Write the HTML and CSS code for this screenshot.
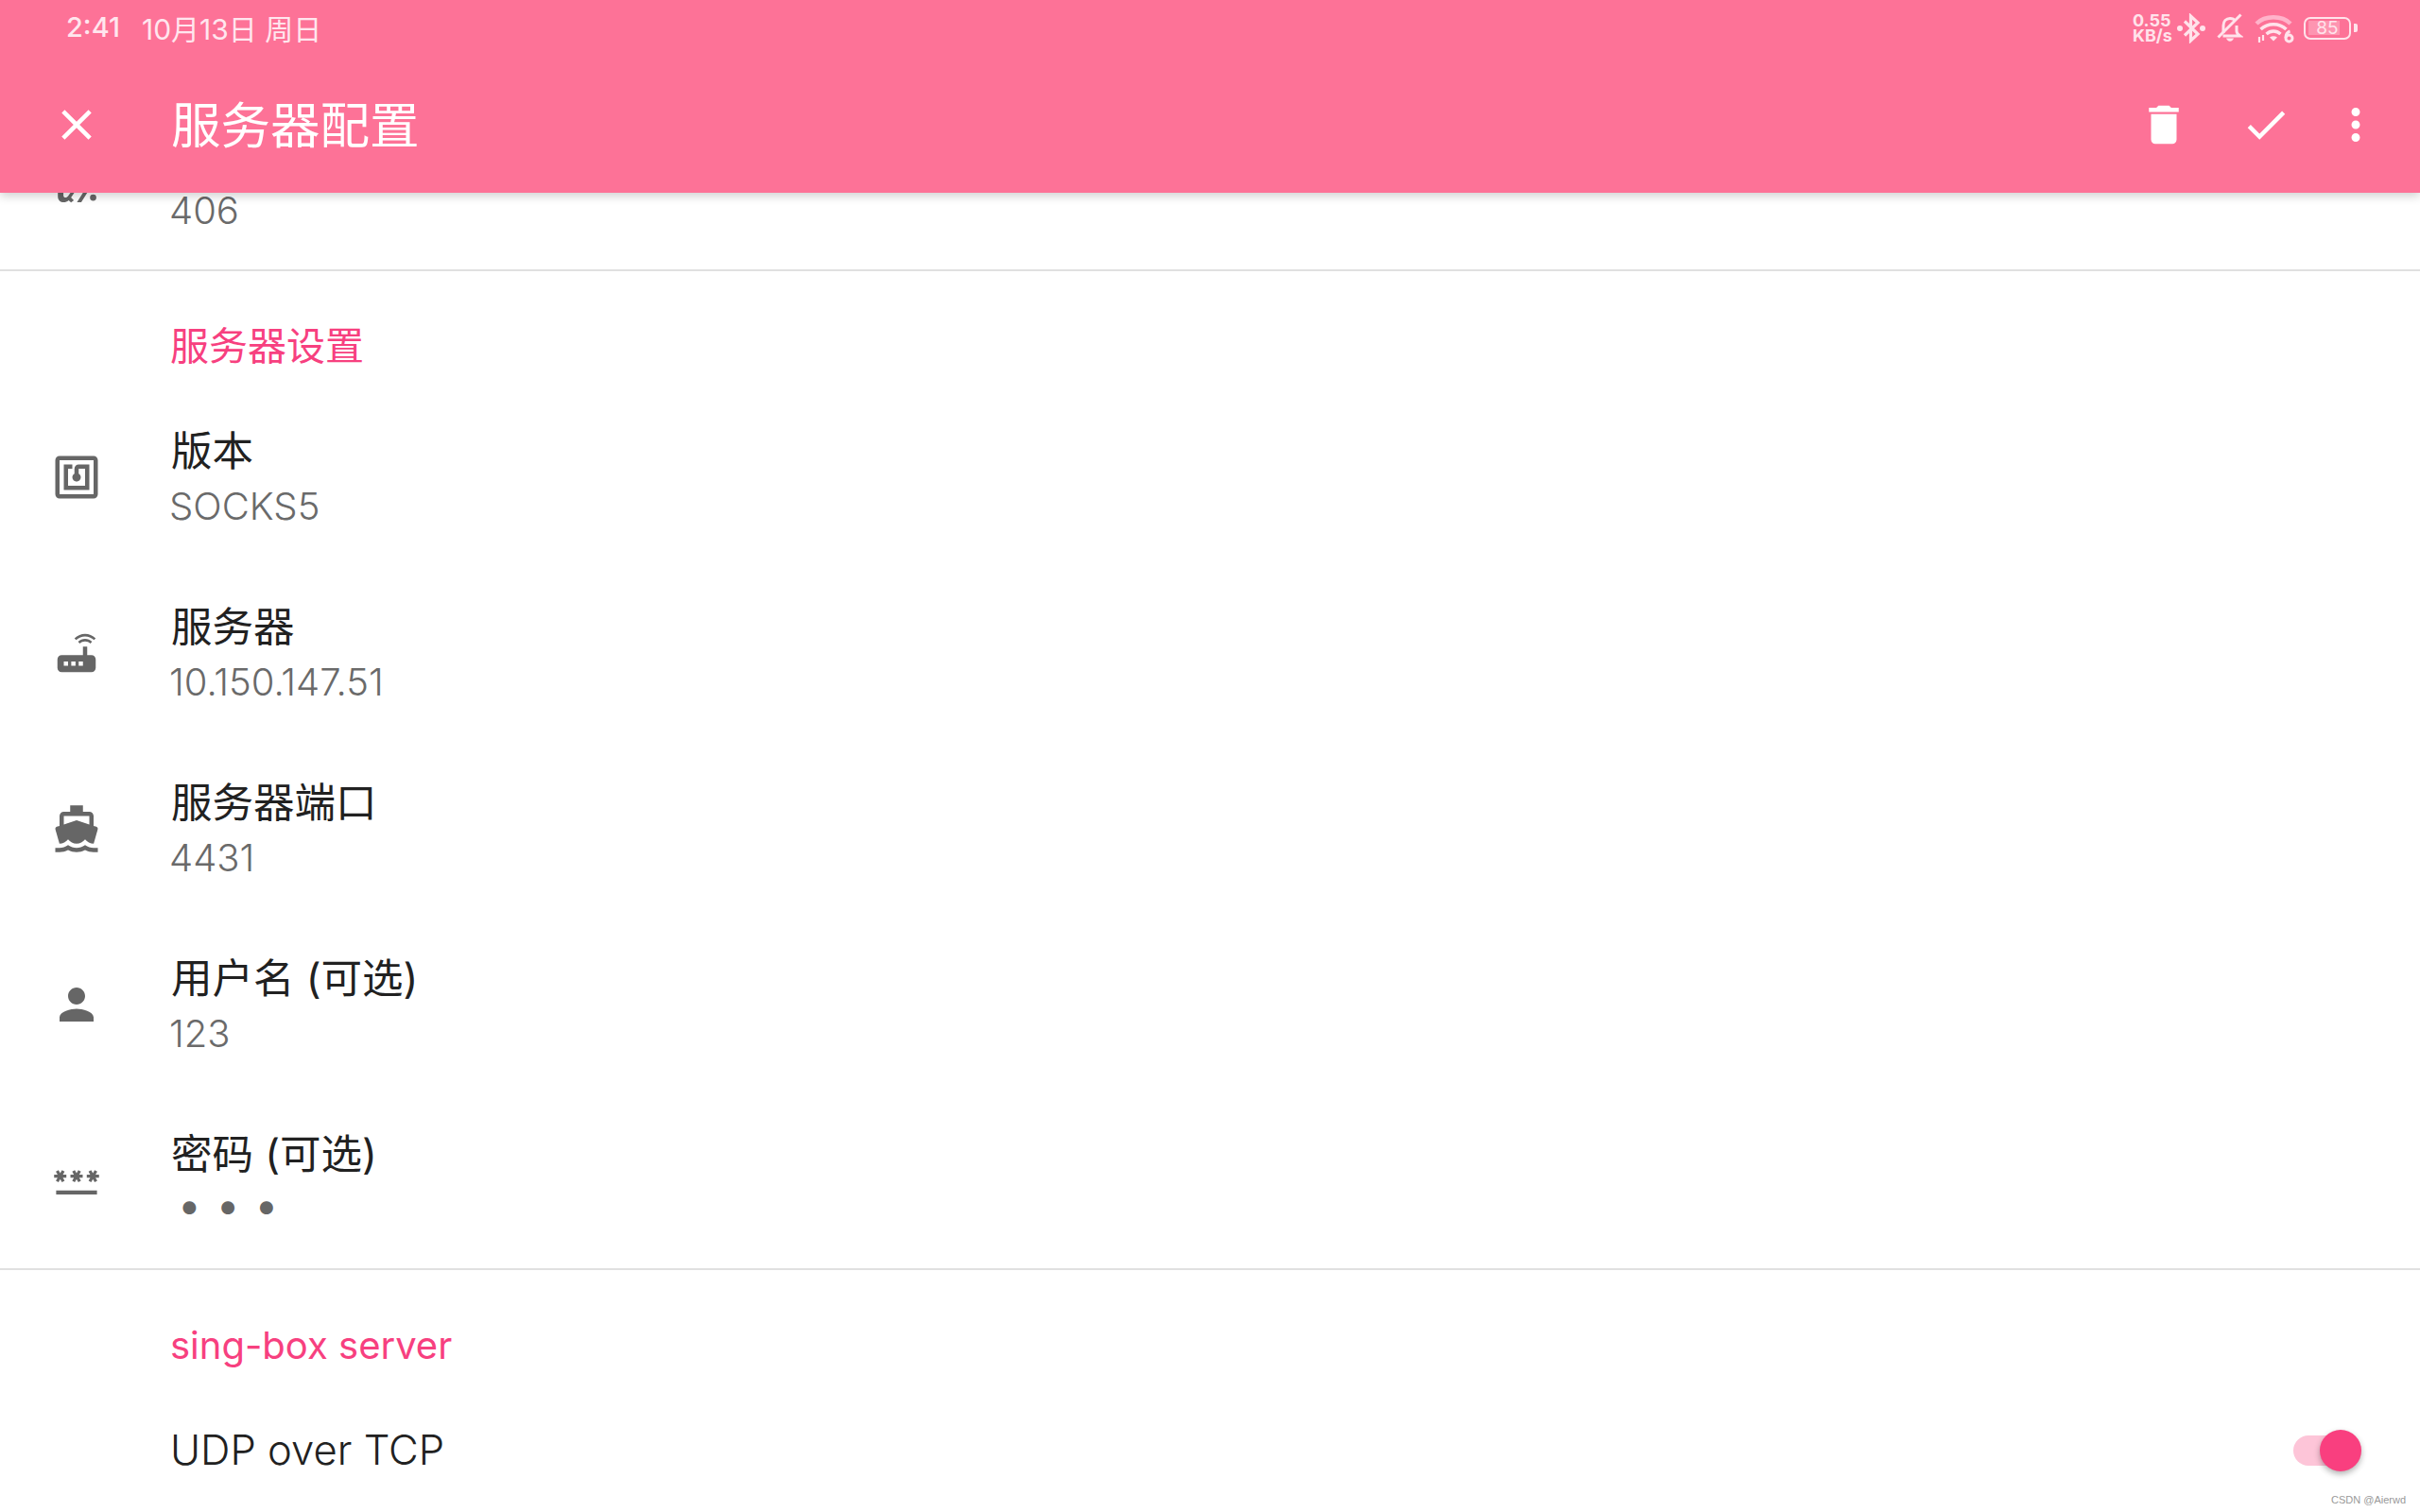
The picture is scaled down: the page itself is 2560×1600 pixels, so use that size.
FILE: index.html
```html
<!DOCTYPE html>
<html lang="zh-CN">
<head>
  <meta charset="UTF-8"/>
  <title>服务器配置</title>
  <link rel="stylesheet" href="styles.css">
</head>
<body>
  <div class="screen">
    <header class="appbar">
      <div class="statusbar">
        <span class="clock">2:41</span>
        <span class="date">10月13日 周日</span>
        <div class="status-icons">
          <div class="netspeed"><span>0.55</span><span>KB/s</span></div>
          <svg class="st-bt" viewBox="0 0 30 32" width="30" height="32">
            <path d="M8 8.500L22 22 14.500 29V3L22 10 8 23.500" fill="none" stroke="#ffe3eb" stroke-width="3.200"/>
            <circle cx="3" cy="16" r="3" fill="#ffe3eb"/>
            <circle cx="27" cy="16" r="3" fill="#ffe3eb"/>
          </svg>
          <svg class="st-bell" viewBox="0 0 28 32" width="28" height="32">
            <path d="M7 21V13C7 8.500 10 5.500 14 5.500c2.500 0 4.500 1 5.800 2.800M21 13v6c0 2 1.500 3.500 3.500 5H6.500" fill="none" stroke="#ffe3eb" stroke-width="3"/>
            <path d="M10 26.500h8c-.6 2-2.200 3.200-4 3.200s-3.400-1.200-4-3.200z" fill="#ffe3eb"/>
            <path d="M25.500 1.500L1.500 25.500" stroke="#ffe3eb" stroke-width="3"/>
          </svg>
          <svg class="st-wifi" viewBox="0 0 42 32" width="42" height="32">
            <path d="M2 11C11 2 29 2 38 11" fill="none" stroke="#ffb3ca" stroke-width="4.500"/>
            <path d="M6.500 17C14 10 26 10 33.500 17" fill="none" stroke="#ffe3eb" stroke-width="3.600"/>
            <path d="M12.500 22C17 18 23 18 27.500 22" fill="none" stroke="#ffe3eb" stroke-width="3.400"/>
            <path d="M16 25.500c2.200-1.600 5.800-1.600 8 0L20 29.500z" fill="#ffe3eb"/>
            <path d="M5 25v6M9 23v6" stroke="#ffe3eb" stroke-width="2.200"/>
            <circle cx="36.500" cy="26.500" r="3.500" fill="none" stroke="#ffe3eb" stroke-width="3"/>
            <path d="M33 26c0-3.500 1.500-6 4.500-7" fill="none" stroke="#ffe3eb" stroke-width="3"/>
          </svg>
          <div class="battery">85</div>
        </div>
      </div>
      <div class="toolbar">
        <svg class="tb-icon" viewBox="0 0 24 24"><path d="M19 6.410L17.590 5 12 10.590 6.410 5 5 6.410 10.590 12 5 17.590 6.410 19 12 13.410 17.590 19 19 17.590 13.410 12z"/></svg>
        <h1 class="tb-title">服务器配置</h1>
        <svg class="tb-icon tb-delete" viewBox="0 0 24 24"><path d="M6 19c0 1.100.9 2 2 2h8c1.100 0 2-.9 2-2V7H6v12zM19 4h-3.500l-1-1h-5l-1 1H5v2h14V4z"/></svg>
        <svg class="tb-icon tb-check" viewBox="0 0 24 24"><path d="M9 16.170L4.830 12l-1.410 1.410L9 19 21 7l-1.410-1.410z"/></svg>
        <svg class="tb-icon tb-more" viewBox="0 0 24 24"><path d="M12 8c1.100 0 2-.9 2-2s-.9-2-2-2-2 .9-2 2 .9 2 2 2zm0 2c-1.100 0-2 .9-2 2s.9 2 2 2 2-.9 2-2-.9-2-2-2zm0 6c-1.100 0-2 .9-2 2s.9 2 2 2 2-.9 2-2-.9-2-2-2z"/></svg>
      </div>
    </header>

    <main class="list">
      <div class="row">
        <svg class="row-icon" viewBox="0 0 24 24"><path d="M3.200 17.300h2.600v1.200c0 .7.5 1.100 1 1.100s.9-.3 1.300-.8l1-1.500h1.800l-1.500 2.300 1.300 1.300-1.300 1-1.100-1c-.8.6-1.500.9-2.300.9-1.600 0-2.800-1-2.800-2.700zM15 17.300h2l-2.800 4.500h-2z"/><circle cx="19.800" cy="19.600" r="1.500"/></svg>
        <div class="row-text row-text-scrolled">
          <div class="row-value">406</div>
        </div>
      </div>
      <hr class="divider">

      <div class="section-title">服务器设置</div>
      <div class="row">
        <svg class="row-icon" viewBox="0 0 24 24"><path d="M20 2H4c-1.100 0-2 .9-2 2v16c0 1.100.9 2 2 2h16c1.100 0 2-.9 2-2V4c0-1.100-.9-2-2-2zm0 18H4V4h16v16zM18 6h-5c-1.100 0-2 .9-2 2v2.280c-.6.350-1 .98-1 1.720 0 1.100.9 2 2 2s2-.9 2-2c0-.74-.4-1.380-1-1.720V8h3v8H8V8h2V6H6v12h12V6z"/></svg>
        <div class="row-text">
          <div class="row-title">版本</div>
          <div class="row-value">SOCKS5</div>
        </div>
      </div>
      <div class="row">
        <svg class="row-icon" viewBox="0 0 24 24"><path d="M20.200 5.900l.8-.8C19.600 3.700 17.800 3 16 3s-3.600.7-5 2.100l.8.8C13 4.800 14.500 4.200 16 4.200s3 .6 4.200 1.700zm-.9.8c-.9-.9-2.100-1.400-3.300-1.400s-2.400.5-3.300 1.400l.8.8c.7-.7 1.600-1 2.500-1 .9 0 1.800.3 2.500 1l.8-.8zM19 13h-2V9h-2v4H5c-1.100 0-2 .9-2 2v4c0 1.100.9 2 2 2h14c1.100 0 2-.9 2-2v-4c0-1.100-.9-2-2-2zM8 18H6v-2h2v2zm3.500 0h-2v-2h2v2zm3.500 0h-2v-2h2v2z"/></svg>
        <div class="row-text">
          <div class="row-title">服务器</div>
          <div class="row-value">10.150.147.51</div>
        </div>
      </div>
      <div class="row">
        <svg class="row-icon" viewBox="0 0 24 24"><path d="M20 21c-1.390 0-2.780-.47-4-1.320-2.440 1.710-5.560 1.710-8 0C6.780 20.530 5.390 21 4 21H2v2h2c1.380 0 2.740-.35 4-.99 2.520 1.290 5.480 1.290 8 0 1.260.65 2.620.99 4 .99h2v-2h-2zM3.950 19H4c1.600 0 3.020-.88 4-2 .98 1.120 2.400 2 4 2s3.020-.88 4-2c.98 1.120 2.400 2 4 2h.05l1.890-6.680c.08-.26.06-.54-.06-.78s-.34-.42-.6-.5L20 10.620V6c0-1.100-.9-2-2-2h-3V1H9v3H6c-1.100 0-2 .9-2 2v4.620l-1.290.42c-.26.08-.48.26-.6.5s-.15.52-.06.78L3.950 19zM6 6h12v3.970L12 8 6 9.970V6z"/></svg>
        <div class="row-text">
          <div class="row-title">服务器端口</div>
          <div class="row-value">4431</div>
        </div>
      </div>
      <div class="row">
        <svg class="row-icon" viewBox="0 0 24 24"><path d="M12 12c2.210 0 4-1.790 4-4s-1.790-4-4-4-4 1.790-4 4 1.790 4 4 4zm0 2c-2.670 0-8 1.340-8 4v2h16v-2c0-2.660-5.330-4-8-4z"/></svg>
        <div class="row-text">
          <div class="row-title">用户名 (可选)</div>
          <div class="row-value">123</div>
        </div>
      </div>
      <div class="row">
        <svg class="row-icon row-icon-pass" viewBox="0 0 24 24"><path d="M2 17h20v2H2v-2zm1.150-4.050L4 11.470l.85 1.480 1.300-.75-.85-1.480H7v-1.500H5.300l.85-1.470L4.850 7 4 8.470 3.150 7l-1.300.75.85 1.470H1v1.500h1.700l-.85 1.480 1.300.75zm6.700-.75l1.300.75.85-1.480.85 1.480 1.300-.75-.85-1.480H15v-1.500h-1.700l.85-1.470-1.300-.75L12 8.470 11.150 7l-1.300.75.85 1.470H9v1.500h1.700l-.85 1.480zM23 9.220h-1.700l.85-1.470-1.300-.75L20 8.470 19.150 7l-1.300.75.85 1.470H17v1.500h1.700l-.85 1.480 1.300.75.85-1.480.85 1.480 1.300-.75-.85-1.480H23v-1.500z"/></svg>
        <div class="row-text">
          <div class="row-title">密码 (可选)</div>
          <div class="row-value row-dots">•••</div>
        </div>
      </div>
      <hr class="divider">

      <div class="section-title section-title-second">sing-box server</div>
      <div class="row row-switch">
        <div class="row-text">
          <div class="row-title row-single">UDP over TCP</div>
        </div>
        <div class="switch"><span class="switch-thumb"></span></div>
      </div>
    </main>

    <div class="watermark">CSDN @Aierwd</div>
  </div>
</body>
</html>
```

FILE: styles.css
```css
html, body{
  margin: 0;
  padding: 0;
  background: #fff;
}
.screen{
  position: relative;
  width: 2560px;
  height: 1600px;
  overflow: hidden;
  background: #fff;
  font-family: Inter, "Noto Sans CJK SC", sans-serif;
}
.appbar{
  position: relative;
  z-index: 2;
  height: 204px;
  background: #fd7297;
  box-shadow: 0 3px 10px rgba(0, 0, 0, 0.2);
}
.statusbar{
  display: flex;
  align-items: center;
  height: 60px;
  padding: 0 73px 0 70px;
  color: #ffe6ee;
  font-size: 30px;
}
.clock{
  margin-right: 23px;
  padding-bottom: 3px;
  font-size: 29px;
  font-weight: 500;
}
.date{
  padding-bottom: 3px;
}
.status-icons{
  display: flex;
  align-items: center;
  margin-left: auto;
}
.netspeed{
  display: flex;
  flex-direction: column;
  width: 47px;
  color: #ffe3eb;
  font-size: 18px;
  font-weight: 700;
  line-height: 16px;
}
.st-bt{
  margin-right: 12px;
}
.st-bell{
  margin-right: 12px;
}
.st-wifi{
  margin-right: 10px;
}
.battery{
  position: relative;
  box-sizing: border-box;
  width: 50px;
  height: 24px;
  border: 2.5px solid #ffe3eb;
  border-radius: 7px;
  background: linear-gradient(rgba(255, 255, 255, 0.25), rgba(255, 255, 255, 0.25)) 3px 2px / 33px 15px no-repeat;
  color: #ffe3eb;
  font-size: 19px;
  line-height: 19px;
  text-align: center;
}
.battery::after{
  content: "";
  position: absolute;
  right: -9px;
  top: 5px;
  width: 4px;
  height: 9px;
  border-radius: 0 2px 2px 0;
  background: #ffe3eb;
}
.toolbar{
  display: flex;
  align-items: center;
  height: 144px;
  padding-left: 54px;
}
.tb-icon{
  width: 54px;
  height: 54px;
  fill: #fff;
  flex: none;
}
.tb-title{
  margin: -6px 0 0 73px;
  color: #fff;
  font-size: 52.500px;
  font-weight: 400;
}
.tb-delete{
  margin-left: auto;
}
.tb-check{
  margin-left: 54px;
}
.tb-more{
  margin-left: 41px;
  margin-right: 41px;
}
.list{
  margin-top: -105px;
}
.row{
  display: flex;
  align-items: center;
  height: 186px;
  padding-left: 54px;
}
.row-icon{
  width: 54px;
  height: 54px;
  fill: #666;
  flex: none;
}
.row-icon-pass{
  transform: scale(0.96);
}
.row-text{
  margin-left: 72px;
  padding-top: 2px;
}
.row-text-scrolled{
  padding-top: 62px;
}
.row-title{
  margin-left: 1px;
  color: #212121;
  font-size: 43.500px;
  line-height: 60px;
}
.row-value{
  margin-left: -1px;
  color: #6a6a6a;
  font-size: 40px;
  font-weight: 300;
  line-height: 58px;
}
.row-dots{
  margin: -5px 0 5px;
  padding-left: 8px;
  color: #666;
  font-size: 44px;
  font-weight: 400;
  letter-spacing: 16px;
}
.divider{
  height: 2px;
  margin: 0;
  border: 0;
  background: #e0e0e0;
}
.section-title{
  height: 125px;
  padding: 49px 0 0 180px;
  box-sizing: border-box;
  color: #f7407f;
  font-size: 41px;
  line-height: 60px;
}
.section-title-second{
  height: 123px;
  padding-top: 50px;
  font-size: 40px;
}
.row-switch{
  height: 136px;
  padding-left: 108px;
  padding-right: 66px;
}
.row-switch .row-text{
  padding-top: 0;
}
.row-single{
  margin-left: 0;
  font-size: 43.600px;
  font-weight: 300;
}
.switch{
  position: relative;
  width: 68px;
  height: 32px;
  margin-left: auto;
  border-radius: 16px;
  background: #fdc5d8;
}
.switch-thumb{
  position: absolute;
  right: -4px;
  top: -6px;
  width: 44px;
  height: 44px;
  border-radius: 50%;
  background: #f93f7f;
  box-shadow: 0 3px 6px rgba(0, 0, 0, 0.3);
}
.watermark{
  position: absolute;
  right: 15px;
  bottom: 7px;
  color: #999;
  font-family: "Liberation Sans", sans-serif;
  font-size: 11px;
}
```
